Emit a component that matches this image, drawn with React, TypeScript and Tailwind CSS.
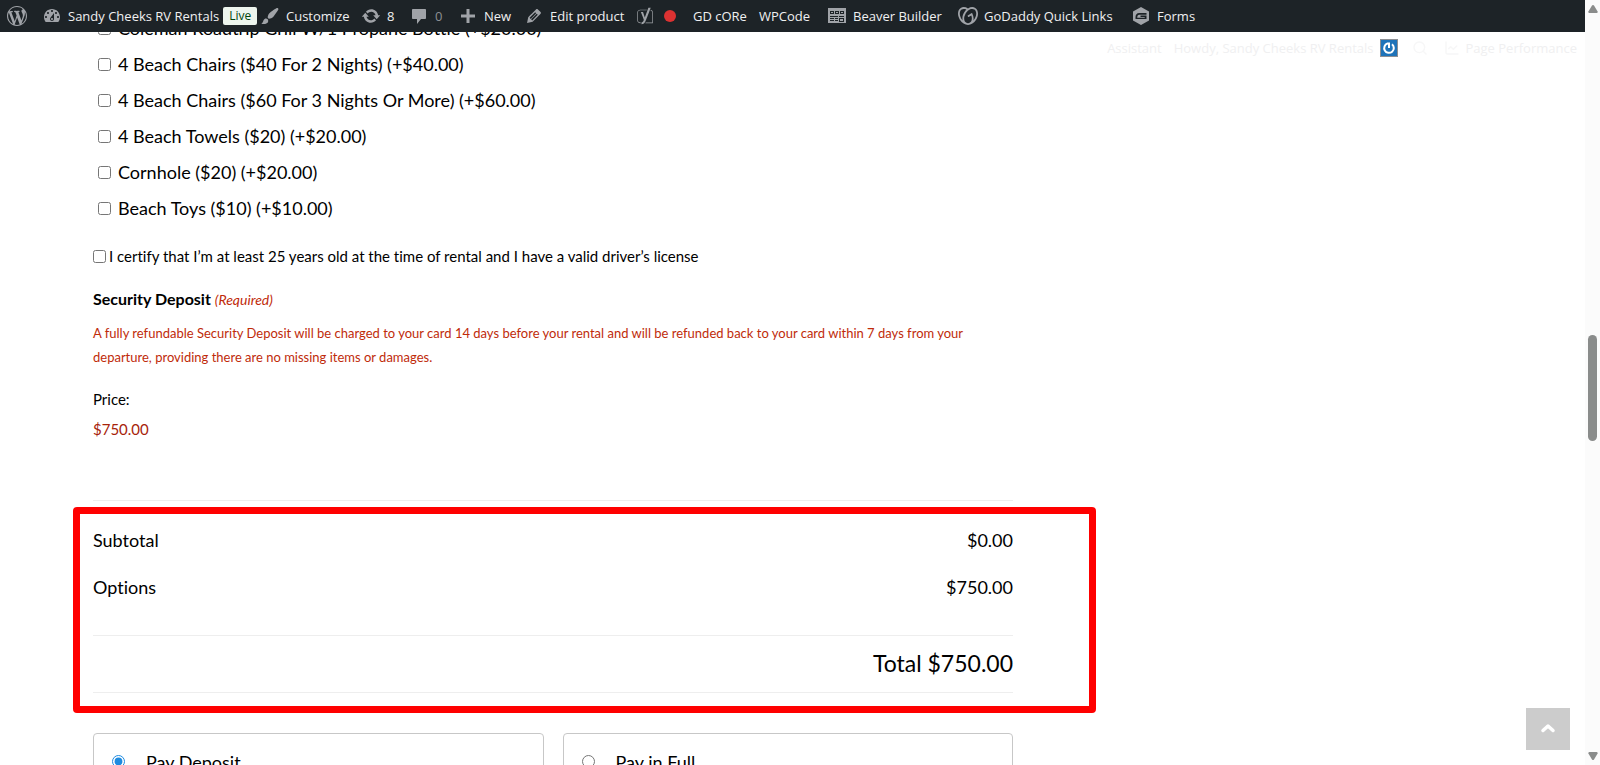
import type { ReactNode } from 'react';
import { ChartLine, Search } from 'lucide-react';
import { FaYoast } from 'react-icons/fa';
import { SiGodaddy } from 'react-icons/si';

const addOns = [
  'Coleman Roadtrip Grill W/1 Propane Bottle (+$20.00)',
  '4 Beach Chairs ($40 For 2 Nights) (+$40.00)',
  '4 Beach Chairs ($60 For 3 Nights Or More) (+$60.00)',
  '4 Beach Towels ($20) (+$20.00)',
  'Cornhole ($20) (+$20.00)',
  'Beach Toys ($10) (+$10.00)',
];

const icons = {
  wordpress:
    'M20 10c0-5.51-4.49-10-10-10C4.48 0 0 4.49 0 10c0 5.52 4.48 10 10 10 5.51 0 10-4.48 10-10zM7.78 15.37L4.37 6.22c.55-.02 1.17-.08 1.17-.08.5-.06.44-1.13-.06-1.11 0 0-1.45.11-2.37.11-.18 0-.37 0-.58-.01C4.12 2.69 6.87 1.11 10 1.11c2.33 0 4.45.87 6.05 2.34-.68-.11-1.65.39-1.65 1.58 0 .74.45 1.36.9 2.1.35.61.55 1.36.55 2.46 0 1.49-1.4 5-1.4 5l-3.03-8.37c.54-.02.82-.17.82-.17.5-.05.44-1.25-.06-1.22 0 0-1.44.12-2.38.12-.87 0-2.33-.12-2.33-.12-.5-.03-.56 1.2-.06 1.22l.92.08 1.26 3.41zM17.41 10c.24-.64.74-1.87.43-4.25.7 1.29 1.05 2.71 1.05 4.25 0 3.29-1.73 6.24-4.4 7.78.97-2.59 1.94-5.2 2.92-7.78zM6.1 18.09C3.12 16.65 1.11 13.53 1.11 10c0-1.3.23-2.48.72-3.59C3.25 10.3 4.67 14.2 6.1 18.09zm4.03-6.63l2.58 6.98c-.86.29-1.76.45-2.71.45-.79 0-1.57-.11-2.29-.33.81-2.38 1.62-4.74 2.42-7.1z',
  dashboard:
    'M3.76 16h12.48c1.1-1.37 1.76-3.11 1.76-5 0-4.42-3.58-8-8-8s-8 3.58-8 8c0 1.89.66 3.63 1.76 5zM10 4c.55 0 1 .45 1 1s-.45 1-1 1-1-.45-1-1 .45-1 1-1zM6 6c.55 0 1 .45 1 1s-.45 1-1 1-1-.45-1-1 .45-1 1-1zm8 0c.55 0 1 .45 1 1s-.45 1-1 1-1-.45-1-1 .45-1 1-1zm-5.37 5.55L12 7v6c0 1.1-.9 2-2 2s-2-.9-2-2c0-.57.24-1.08.63-1.45zM4 10c.55 0 1 .45 1 1s-.45 1-1 1-1-.45-1-1 .45-1 1-1zm12 0c.55 0 1 .45 1 1s-.45 1-1 1-1-.45-1-1 .45-1 1-1zm-5 3c0-.55-.45-1-1-1s-1 .45-1 1 .45 1 1 1 1-.45 1-1z',
  brush:
    'M18.33 3.57s.27-.8-.31-1.36c-.53-.52-1.22-.24-1.22-.24-.61.3-5.76 3.47-7.67 5.57-.86.96-2.06 3.79-1.09 4.82.92.98 3.96-.17 4.79-1 2.06-2.06 5.21-7.17 5.5-7.79zM1.4 17.65c2.37-1.56 1.46-3.41 3.23-4.64.93-.65 2.22-.62 3.08.29.63.67.8 2.57-.16 3.46-1.57 1.45-4 1.55-6.15.89z',
  update:
    'M10.2 3.28c3.53 0 6.43 2.61 6.92 6h2.08l-3.5 4-3.5-4h2.32c-.45-1.97-2.21-3.45-4.32-3.45-1.45 0-2.73.71-3.54 1.78L4.95 5.66C6.23 4.2 8.11 3.28 10.2 3.28zm-.4 13.44c-3.52 0-6.43-2.61-6.92-6H.8l3.5-4c1.17 1.33 2.33 2.67 3.5 4H5.48c.45 1.97 2.21 3.45 4.32 3.45 1.45 0 2.73-.71 3.54-1.78l1.71 1.95c-1.28 1.46-3.15 2.38-5.25 2.38z',
  comment: 'M4 3h12c.55 0 1 .45 1 1v8c0 .55-.45 1-1 1h-4l-4 5v-5H4c-.55 0-1-.45-1-1V4c0-.55.45-1 1-1z',
  plus: 'M17 8.5v3h-5.5V17h-3v-5.5H3v-3h5.5V3h3v5.5H17z',
  pencil:
    'M13.89 3.39l2.71 2.72c.46.46.42 1.24.03 1.64l-8.01 8.02-5.56 1.16 1.16-5.58s7.6-7.63 7.99-8.03c.39-.39 1.22-.39 1.68.07zm-2.73 2.79l-5.59 5.61 1.11 1.11 5.54-5.65zm-2.97 8.23l5.58-5.6-1.07-1.08-5.59 5.6z',
  builder: 'M1 2h18v15H1V2zm2 3v3h4V5H3zm5 0v3h4V5H8zm5 0v3h4V5h-4zM3 10v1h8v-1H3zm9 0v1h5v-1h-5zm-9 2v1h4v-1H3zm5 0v1h3v-1H8zm-5 2v1h4v-1H3zm5 0v1h3v-1H8zm4-2v4h5v-4h-5zM4 6h2v1H4V6zm5 0h2v1H9V6zm5 0h2v1h-2V6zm-1 7h3v2h-3v-2z',
  gravity:
    'M10 1l8 4.500v9L10 19l-8-4.500v-9L10 1zm5.500 6H8.200c-2.400 0-3.700 1.600-3.700 4.300V13h11V9.500h-6V11h4.200v.700H6.200c.1-1.900.7-2.900 2.200-2.900h7.100V7z',
};

function Dashicon({ name }: { name: keyof typeof icons }) {
  return (
    <svg viewBox="0 0 20 20" aria-hidden="true" className="size-5 shrink-0 fill-[#a0a3a8]">
      <path fillRule="evenodd" d={icons[name]} />
    </svg>
  );
}

type BarItemProps = {
  icon?: ReactNode;
  label?: string;
  children?: ReactNode;
  className?: string;
};

function BarItem({ icon, label, children, className = 'px-2' }: BarItemProps) {
  return (
    <a href="#" className={`flex h-8 shrink-0 items-center gap-1.5 leading-5 whitespace-nowrap ${className}`}>
      {icon}
      {label}
      {children}
    </a>
  );
}

function AdminBar() {
  return (
    <header className="relative z-10 flex h-8 shrink-0 bg-[#1d2327] font-['Open_Sans','Noto_Sans',sans-serif] text-[13px] text-[#f0f0f1]">
      <nav className="flex items-center pl-[7px]">
        <BarItem icon={<Dashicon name="wordpress" />} className="w-[35px]" />
        <BarItem icon={<Dashicon name="dashboard" />} label="Sandy Cheeks RV Rentals" className="w-[218px]">
          <span className="-ml-0.5 rounded-xs bg-[#edf5ee] px-1.5 text-xs leading-[18px] text-[#00450c]">Live</span>
        </BarItem>
        <BarItem icon={<Dashicon name="brush" />} label="Customize" className="w-[101px]" />
        <BarItem icon={<Dashicon name="update" />} label="8" className="w-12" />
        <BarItem icon={<Dashicon name="comment" />} label="0" className="w-[49px] text-[#8c8f94]" />
        <BarItem icon={<Dashicon name="plus" />} label="New" className="w-[66px]" />
        <BarItem icon={<Dashicon name="pencil" />} label="Edit product" className="w-28" />
        <BarItem icon={<FaYoast className="size-[18px] text-[#a0a3a8]" />} className="w-[57px]">
          <span className="ml-1 size-3 rounded-full bg-[#dc3232]" />
        </BarItem>
        <BarItem label="GD cORe" className="w-[66px]" />
        <BarItem label="WPCode" className="w-[68px]" />
        <BarItem icon={<Dashicon name="builder" />} label="Beaver Builder" className="w-[131px]" />
        <BarItem icon={<SiGodaddy className="size-5 text-[#a0a3a8]" />} label="GoDaddy Quick Links" className="w-[165px]" />
        <BarItem icon={<Dashicon name="gravity" />} label="Forms" />
      </nav>

      {/* Account links wrap to a second line, below the bar */}
      <nav className="absolute top-8 right-0 flex">
        <BarItem label="Assistant" className="px-1.5" />
        <BarItem label="Howdy, Sandy Cheeks RV Rentals" className="px-1.5">
          <span className="flex size-[18px] items-center justify-center border border-[#8c8f94] bg-[#1e73b9]">
            <svg viewBox="0 0 16 16" className="size-4 fill-none stroke-white stroke-2">
              <path d="M8 8V3.500H6.500a4.800 4.800 0 1 0 4.500.8" />
            </svg>
          </span>
        </BarItem>
        <BarItem icon={<Search className="size-4 opacity-50" />} className="w-10 pl-2" />
        <BarItem icon={<ChartLine className="size-4 opacity-50" />} label="Page Performance" className="pr-2" />
      </nav>
    </header>
  );
}

function Summary() {
  return (
    <section className="relative mt-14 text-lg">
      <dl className="border-t border-[#eee] pt-[15px] pb-[25px]">
        <div className="flex h-[47px] items-center justify-between">
          <dt>Subtotal</dt>
          <dd>$0.00</dd>
        </div>
        <div className="flex h-[47px] items-center justify-between">
          <dt>Options</dt>
          <dd>$750.00</dd>
        </div>
      </dl>
      <p className="border-y border-[#eee] pt-[9px] pb-[11px] text-right text-[23px] leading-9">Total $750.00</p>
      <div className="pointer-events-none absolute top-[7px] -right-[83px] -bottom-5 -left-5 rounded-sm border-[7px] border-[#ff0000]" />
    </section>
  );
}

function PaymentOption({ label, defaultChecked }: { label: string; defaultChecked?: boolean }) {
  return (
    <label className="flex h-[57px] flex-1 items-center gap-[21px] rounded border border-[#c7c7c7] px-[18px] text-lg">
      <input type="radio" name="payment" defaultChecked={defaultChecked} className="size-[13px] accent-[#1e8be0]" />
      {label}
    </label>
  );
}

function Scrollbar() {
  return (
    <div className="flex w-[15px] shrink-0 flex-col items-center bg-[#fbfbfb] py-[5px]">
      <svg viewBox="0 0 10 8" className="h-2 w-2.5 fill-[#8a8c8b]">
        <path d="M5 0q.6 0 1 .6L9.600 6.500Q10 8 8.600 8H1.400Q0 8 .4 6.500L4 .6Q4.400 0 5 0z" />
      </svg>
      <div className="flex w-full flex-1 flex-col items-center">
        <div className="flex-[322]" />
        <div className="h-[106px] w-[9px] rounded-full bg-[#8a8c8b]" />
        <div className="flex-[311]" />
      </div>
      <svg viewBox="0 0 10 8" className="h-2 w-2.5 fill-[#8a8c8b]">
        <path d="M5 8q.6 0 1-.6L9.600 1.500Q10 0 8.600 0H1.400Q0 0 .4 1.500L4 7.400Q4.400 8 5 8z" />
      </svg>
    </div>
  );
}

export default function App() {
  return (
    <div className="flex h-screen overflow-hidden bg-white font-['Lato',sans-serif] text-black [font-variant-ligatures:none]">
      <div className="relative flex min-w-0 flex-1 flex-col overflow-hidden">
        <AdminBar />

        {/* The form is scrolled, so its first row sits partly under the bar */}
        <main className="-mt-[22px] ml-[93px] max-w-[920px] shrink-0">
          <form>
            <ul className="pl-[5px] text-lg">
              {addOns.map((name) => (
                <li key={name}>
                  <label className="flex h-9 items-center gap-[7px]">
                    <input type="checkbox" className="size-[13px]" />
                    {name}
                  </label>
                </li>
              ))}
            </ul>

            <label className="mt-[18px] flex h-6 items-center gap-[3px] text-[15px]">
              <input type="checkbox" className="size-[13px]" />
              I certify that I’m at least 25 years old at the time of rental and I have a valid driver’s license
            </label>

            <fieldset className="mt-[19px]">
              <legend className="text-base leading-6 font-bold">
                Security Deposit <span className="text-sm font-normal text-[#c02b0a] italic">(Required)</span>
              </legend>
              <p className="mt-2.5 text-[13px] leading-6 text-[#c02b0a]">
                A fully refundable Security Deposit will be charged to your card 14 days before your rental and will be
                refunded back to your card within 7 days from your departure, providing there are no missing items or
                damages.
              </p>
              <p className="mt-[15px] text-[15px] leading-[30px]">
                Price:
                <br />
                <span className="text-[#a7230a]">$750.00</span>
              </p>
            </fieldset>

            <Summary />

            <div className="mt-10 flex gap-[19px]">
              <PaymentOption label="Pay Deposit" defaultChecked />
              <PaymentOption label="Pay in Full" />
            </div>
          </form>
        </main>

        <button
          type="button"
          aria-label="Back to top"
          className="absolute right-[15px] bottom-[15px] flex h-[42px] w-11 items-center justify-center bg-[#ccc] pb-0.5"
        >
          <svg viewBox="0 0 16 10" className="h-2.5 w-4 fill-none stroke-white stroke-[3.5]">
            <path d="M3 7.500l5-4.500L13 7.500" strokeLinecap="round" strokeLinejoin="round" />
          </svg>
        </button>
      </div>
      <Scrollbar />
    </div>
  );
}
